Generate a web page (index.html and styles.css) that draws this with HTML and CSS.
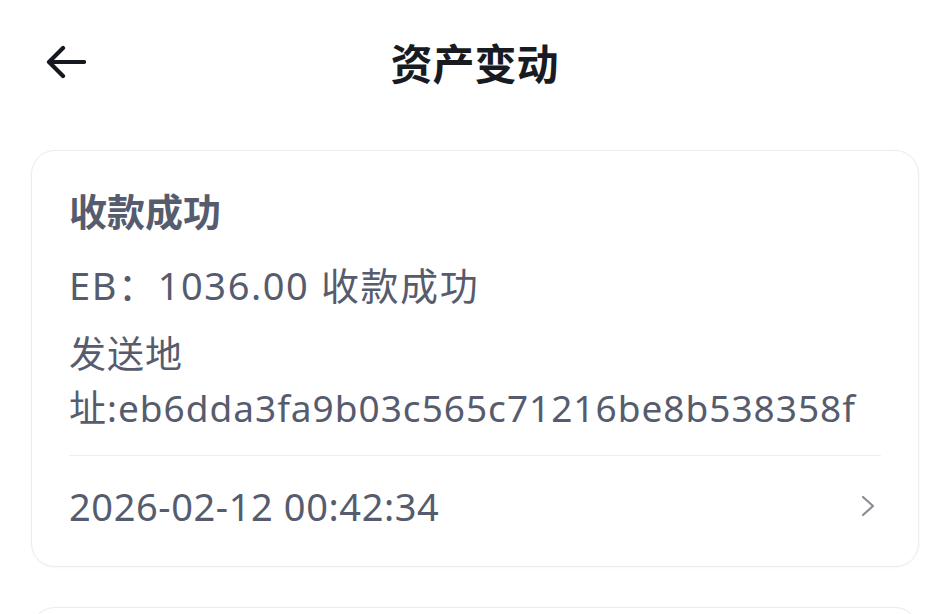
FILE: index.html
```html
<!DOCTYPE html>
<html lang="zh-CN">
<head>
  <meta charset="UTF-8" />
  <meta name="viewport" content="width=device-width, initial-scale=1.0" />
  <title>资产变动</title>
  <link rel="stylesheet" href="styles.css">
</head>
<body>

  <header class="top-bar">
    <button class="back-btn" aria-label="返回">
      <svg width="40" height="36" viewBox="0 0 40 36">
        <path d="M38 18 H4 M17 4 L3 18 L17 32" fill="none" stroke="#15181f" stroke-width="4.2" stroke-linecap="round" stroke-linejoin="round"/>
      </svg>
    </button>
    <h1 class="page-title">资产变动</h1>
  </header>

  <main class="list">
    <section class="record-card">
      <div class="record-title">收款成功</div>
      <div class="record-amount">EB：1036.00 收款成功</div>
      <div class="record-address">发送地址:eb6dda3fa9b03c565c71216be8b538358f</div>
      <div class="record-footer">
        <span class="record-time">2026-02-12 00:42:34</span>
        <svg class="chevron" width="14" height="22" viewBox="0 0 14 22">
          <path d="M2 2 L12 11 L2 20" fill="none" stroke="#8a8d94" stroke-width="2.2" stroke-linecap="round" stroke-linejoin="round"/>
        </svg>
      </div>
    </section>

    <section class="record-card record-card-next"></section>
  </main>

</body>
</html>
```

FILE: styles.css
```css
* {
  margin: 0;
  padding: 0;
  box-sizing: border-box;
}

html, body {
  height: 100%;
  overflow: hidden;
}

body {
  font-family: "Noto Sans", "Noto Sans CJK SC", sans-serif;
  background: #ffffff;
  color: #565c6e;
}

.top-bar {
  height: 122px;
  display: flex;
  align-items: center;
  justify-content: center;
  position: relative;
}

.back-btn {
  position: absolute;
  left: 46px;
  top: 44px;
  background: none;
  border: none;
  cursor: pointer;
  display: flex;
}

.page-title {
  font-size: 42px;
  font-weight: 700;
  color: #181b22;
  padding-left: 6px;
}

.list {
  margin: 28px 24px 0 31px;
  display: flex;
  flex-direction: column;
  gap: 40px;
}

.record-card {
  border: 1.5px solid #ececee;
  border-radius: 24px;
  background: #fff;
  padding: 36px 37px 0;
  box-shadow: 0 1px 3px rgba(0,0,0,0.03);
}

.record-card-next {
  height: 120px;
}

.record-title {
  font-size: 38px;
  font-weight: 700;
  line-height: 48px;
}

.record-amount {
  margin-top: 26px;
  font-size: 38px;
  line-height: 48px;
  letter-spacing: 1.6px;
}

.record-address {
  margin-top: 18px;
  font-size: 37px;
  line-height: 54px;
  letter-spacing: 1px;
}

.record-footer {
  margin-top: 20px;
  border-top: 1.5px solid #efeff1;
  padding: 26px 6px 36px 0;
  display: flex;
  align-items: center;
  justify-content: space-between;
}

.record-time {
  font-size: 38px;
  line-height: 48px;
  letter-spacing: 0.6px;
}
```
